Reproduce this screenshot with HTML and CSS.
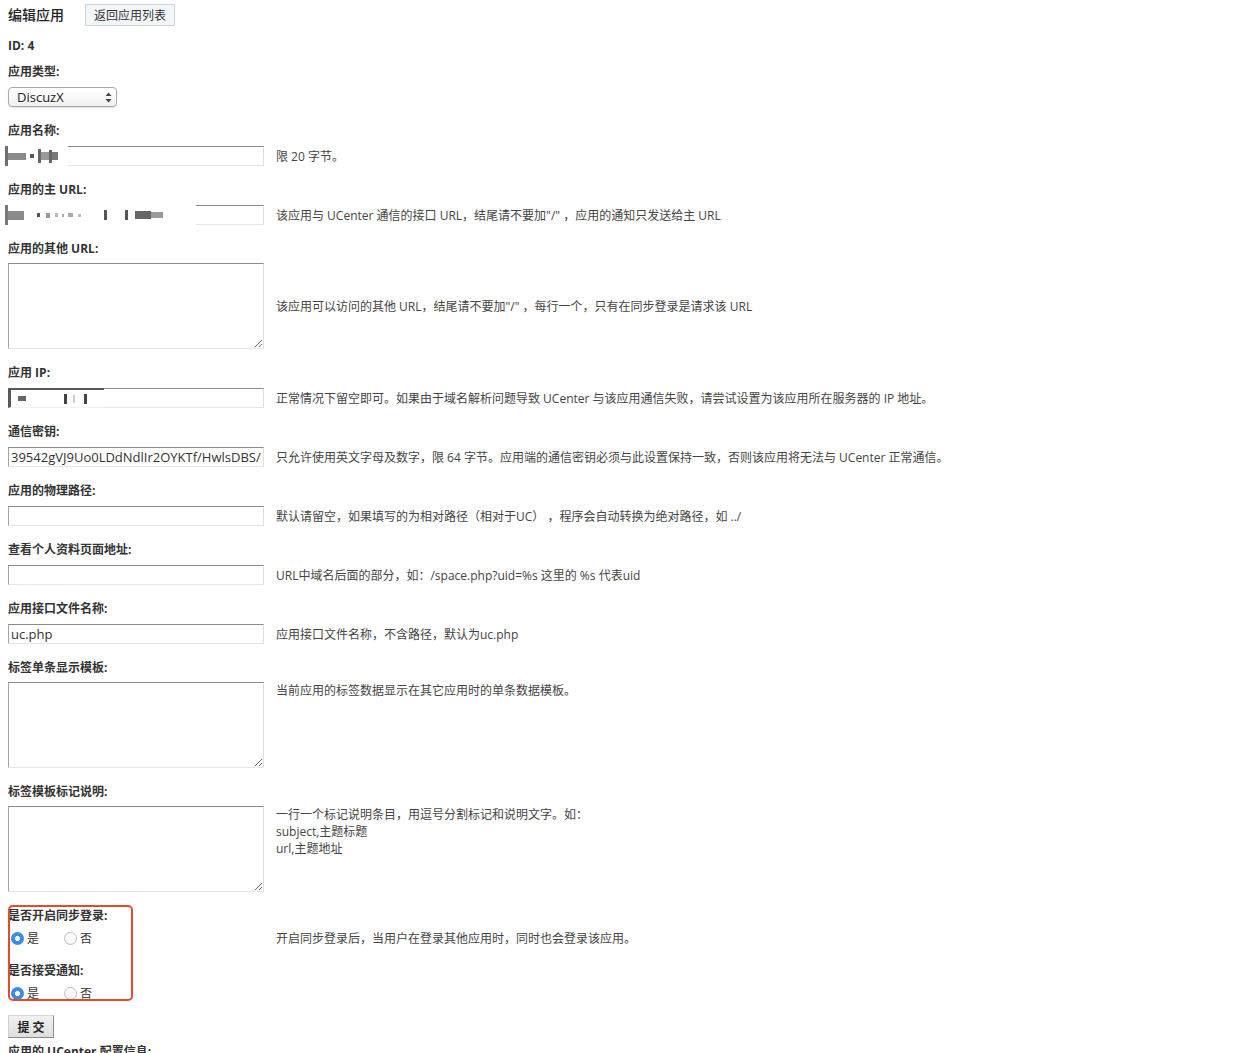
FILE: index.html
```html
<!DOCTYPE html>
<html lang="zh-CN">
<head>
<meta charset="utf-8">
<title>编辑应用</title>
<link rel="stylesheet" href="styles.css">
</head>
<body>
<div class="page">
  <div class="head">
    <h3 class="title">编辑应用</h3>
    <button class="btn-back" type="button">返回应用列表</button>
  </div>

  <div class="label id">ID: 4</div>

  <div class="field">
    <div class="label">应用类型:</div>
    <div class="row">
      <div class="select-wrap">
        <select class="select"><option>DiscuzX</option></select>
        <svg class="arrows" width="7" height="11" viewBox="0 0 7 11"><path d="M3.5 0.5 L6.5 4 L0.5 4 Z M3.5 10.5 L6.5 7 L0.5 7 Z" fill="#444"/></svg>
      </div>
    </div>
  </div>

  <div class="field">
    <div class="label">应用名称:</div>
    <div class="row">
      <div class="cell">
        <input class="txt" type="text" value="">
        <div class="redact r-name">
          <i style="width:3px;height:20px;background:#6e6e6e"></i>
          <i style="width:18px;height:7px;background:#8a8a8a"></i>
          <i style="width:4px;height:4px;background:#555;margin-left:4px"></i>
          <i style="width:3px;height:14px;background:#666;margin-left:4px"></i>
          <i style="width:8px;height:8px;background:#9a9a9a"></i>
          <i style="width:3px;height:13px;background:#666"></i>
          <i style="width:6px;height:8px;background:#7a7a7a"></i>
        </div>
      </div>
      <span class="desc">限 20 字节。</span>
    </div>
  </div>

  <div class="field">
    <div class="label">应用的主 URL:</div>
    <div class="row">
      <div class="cell">
        <input class="txt" type="text" value="">
        <div class="redact r-url">
          <i style="width:3px;height:20px;background:#777"></i>
          <i style="width:16px;height:9px;background:#8a8a8a"></i>
          <i style="width:3px;height:4px;background:#555;margin-left:13px"></i>
          <i style="width:4px;height:5px;background:#999;margin-left:6px"></i>
          <i style="width:3px;height:4px;background:#bbb;margin-left:5px"></i>
          <i style="width:2px;height:3px;background:#aaa;margin-left:4px"></i>
          <i style="width:5px;height:4px;background:#aaa;margin-left:4px"></i>
          <i style="width:3px;height:3px;background:#bbb;margin-left:5px"></i>
          <i style="width:3px;height:10px;background:#555;margin-left:23px"></i>
          <i style="width:3px;height:10px;background:#555;margin-left:18px"></i>
          <i style="width:16px;height:8px;background:#666;margin-left:7px"></i>
          <i style="width:12px;height:6px;background:#999"></i>
        </div>
      </div>
      <span class="desc">该应用与 UCenter 通信的接口 URL，结尾请不要加"/" ，应用的通知只发送给主 URL</span>
    </div>
  </div>

  <div class="field big">
    <div class="label">应用的其他 URL:</div>
    <div class="row">
      <textarea class="area"></textarea>
      <span class="desc">该应用可以访问的其他 URL，结尾请不要加"/" ，每行一个，只有在同步登录是请求该 URL</span>
    </div>
  </div>

  <div class="field">
    <div class="label">应用 IP:</div>
    <div class="row">
      <div class="cell">
        <input class="txt" type="text" value="">
        <div class="redact r-ip">
          <i style="width:8px;height:5px;background:#666;margin-left:7px"></i>
          <i style="width:3px;height:10px;background:#444;margin-left:38px"></i>
          <i style="width:2px;height:8px;background:#ccc;margin-left:6px"></i>
          <i style="width:3px;height:10px;background:#444;margin-left:9px"></i>
        </div>
      </div>
      <span class="desc">正常情况下留空即可。如果由于域名解析问题导致 UCenter 与该应用通信失败，请尝试设置为该应用所在服务器的 IP 地址。</span>
    </div>
  </div>

  <div class="field">
    <div class="label">通信密钥:</div>
    <div class="row">
      <input class="txt" type="text" value="39542gVJ9Uo0LDdNdlIr2OYKTf/HwlsDBS/(Fk3p">
      <span class="desc">只允许使用英文字母及数字，限 64 字节。应用端的通信密钥必须与此设置保持一致，否则该应用将无法与 UCenter 正常通信。</span>
    </div>
  </div>

  <div class="field">
    <div class="label">应用的物理路径:</div>
    <div class="row">
      <input class="txt" type="text" value="">
      <span class="desc">默认请留空，如果填写的为相对路径（相对于UC） ，程序会自动转换为绝对路径，如 ../</span>
    </div>
  </div>

  <div class="field">
    <div class="label">查看个人资料页面地址:</div>
    <div class="row">
      <input class="txt" type="text" value="">
      <span class="desc">URL中域名后面的部分，如：/space.php?uid=%s 这里的 %s 代表uid</span>
    </div>
  </div>

  <div class="field">
    <div class="label">应用接口文件名称:</div>
    <div class="row">
      <input class="txt" type="text" value="uc.php">
      <span class="desc">应用接口文件名称，不含路径，默认为uc.php</span>
    </div>
  </div>

  <div class="field big">
    <div class="label">标签单条显示模板:</div>
    <div class="row">
      <textarea class="area"></textarea>
      <span class="desc top">当前应用的标签数据显示在其它应用时的单条数据模板。</span>
    </div>
  </div>

  <div class="field big">
    <div class="label">标签模板标记说明:</div>
    <div class="row">
      <textarea class="area"></textarea>
      <span class="desc top">一行一个标记说明条目，用逗号分割标记和说明文字。如：<br>subject,主题标题<br>url,主题地址</span>
    </div>
  </div>

  <div class="sync">
    <div class="field radio-field">
      <div class="label">是否开启同步登录:</div>
      <div class="row">
        <div class="radios">
          <label class="opt first"><input class="radio" type="radio" name="synlogin" checked><span>是</span></label>
          <label class="opt"><input class="radio" type="radio" name="synlogin"><span>否</span></label>
        </div>
        <span class="desc">开启同步登录后，当用户在登录其他应用时，同时也会登录该应用。</span>
      </div>
    </div>
    <div class="field radio-field last">
      <div class="label">是否接受通知:</div>
      <div class="row">
        <div class="radios">
          <label class="opt first"><input class="radio" type="radio" name="recvnote" checked><span>是</span></label>
          <label class="opt"><input class="radio" type="radio" name="recvnote"><span>否</span></label>
        </div>
      </div>
    </div>
    <div class="mark"></div>
  </div>

  <button class="btn-submit" type="button">提 交</button>

  <div class="label final">应用的 UCenter 配置信息:</div>
</div>
</body>
</html>
```

FILE: styles.css
```css
* {
  box-sizing: border-box;
}

html,
body {
  margin: 0;
  background: #ffffff;
}

body {
  font-family: "Open Sans", "Noto Sans CJK SC", sans-serif;
  font-size: 12px;
  line-height: 19px;
  color: #333333;
}

.page {
  padding: 4px 8px 0;
}

.head {
  display: flex;
  align-items: center;
  height: 22px;
}

.title {
  margin: 0 21px 0 0;
  font-size: 14px;
  font-weight: 500;
  line-height: 22px;
  color: #222222;
}

.btn-back {
  height: 22px;
  padding: 0 8px;
  font-family: "Open Sans", "Noto Sans CJK SC", sans-serif;
  font-size: 12px;
  color: #333333;
  background: #f3f6f9;
  border: 1px solid #c8d2dc;
  border-radius: 1px;
}

.label {
  height: 19px;
  line-height: 19px;
  font-weight: bold;
  color: #333333;
  white-space: nowrap;
}

.label.id {
  margin: 10px 0 7px;
}

.field {
  margin-bottom: 14px;
}

.field > .row {
  margin-top: 6px;
}

.field.big > .row {
  margin-top: 5px;
}

.row {
  display: flex;
  align-items: center;
}

.cell {
  position: relative;
  flex: none;
}

.txt {
  display: block;
  width: 256px;
  height: 20px;
  padding: 0 2px;
  border: 1px solid;
  border-color: #8a8a8a #dedede #e6e6e6 #a5a5a5;
  background: #ffffff;
  font-family: "Open Sans", "Noto Sans CJK SC", sans-serif;
  font-size: 13px;
  color: #333333;
  flex: none;
  outline: none;
}

.area {
  display: block;
  width: 256px;
  height: 86px;
  padding: 2px;
  border: 1px solid;
  border-color: #8a8a8a #dedede #e6e6e6 #a5a5a5;
  background: #ffffff;
  font-family: "Open Sans", "Noto Sans CJK SC", sans-serif;
  font-size: 13px;
  flex: none;
  margin: 0;
}

.desc {
  margin-left: 12px;
  line-height: 17px;
  color: #444444;
  white-space: nowrap;
}

.desc.top {
  align-self: flex-start;
}

/* select */
.select-wrap {
  position: relative;
  width: 109px;
  height: 20px;
}

.select {
  appearance: none;
  -webkit-appearance: none;
  display: block;
  width: 109px;
  height: 20px;
  padding: 0 0 0 8px;
  border: 1px solid #a8a8a8;
  border-radius: 4px;
  background: linear-gradient(#ffffff, #f1f1f1);
  font-family: "Open Sans", "Noto Sans CJK SC", sans-serif;
  font-size: 13px;
  color: #222222;
  box-shadow: 0 1px 1px rgba(0, 0, 0, 0.12);
}

.arrows {
  position: absolute;
  right: 5px;
  top: 5px;
  pointer-events: none;
}

/* redaction overlays */
.redact {
  position: absolute;
  top: 0;
  height: 20px;
  background: #ffffff;
  display: flex;
  align-items: center;
}

.redact i {
  display: block;
  flex: none;
}

.r-name {
  left: -3px;
  width: 63px;
}

.r-url {
  left: -3px;
  width: 191px;
}

.r-ip {
  left: 0;
  width: 96px;
  border-top: 2px solid #5a5a5a;
  border-left: 3px solid #5a5a5a;
  border-bottom: 1px solid #f2f2f2;
}

/* radio section */
.sync {
  position: relative;
}

.radio-field > .row {
  margin-top: 4px;
}

.radio-field.last {
  margin-bottom: 0;
}

.radios {
  display: flex;
  align-items: center;
  width: 256px;
  height: 18px;
  flex: none;
}

.opt {
  display: flex;
  align-items: center;
  color: #333333;
}

.opt.first {
  margin-right: 22px;
}

.radio {
  appearance: none;
  -webkit-appearance: none;
  width: 13px;
  height: 13px;
  margin: 0 3px;
  border-radius: 50%;
  border: 1px solid #bdbdbd;
  background: linear-gradient(#ffffff, #f4f4f4);
}

.radio:checked {
  border-color: #2f7fe6;
  background: radial-gradient(circle, #ffffff 0, #ffffff 2.2px, #3a8ef3 2.8px);
}

.mark {
  position: absolute;
  left: 0;
  top: -1px;
  width: 125px;
  height: 96px;
  border: 2px solid #e24b2c;
  border-radius: 5px;
  pointer-events: none;
}

.btn-submit {
  display: block;
  margin-top: 13px;
  width: 46px;
  height: 23px;
  padding: 0;
  font-family: "Open Sans", "Noto Sans CJK SC", sans-serif;
  font-size: 12px;
  font-weight: bold;
  color: #222222;
  background: linear-gradient(#f1f1f1, #dedede);
  border: 1px solid;
  border-color: #d8d8d8 #8a8a8a #8a8a8a #d0d0d0;
}

.label.final {
  margin-top: 4px;
}
```
